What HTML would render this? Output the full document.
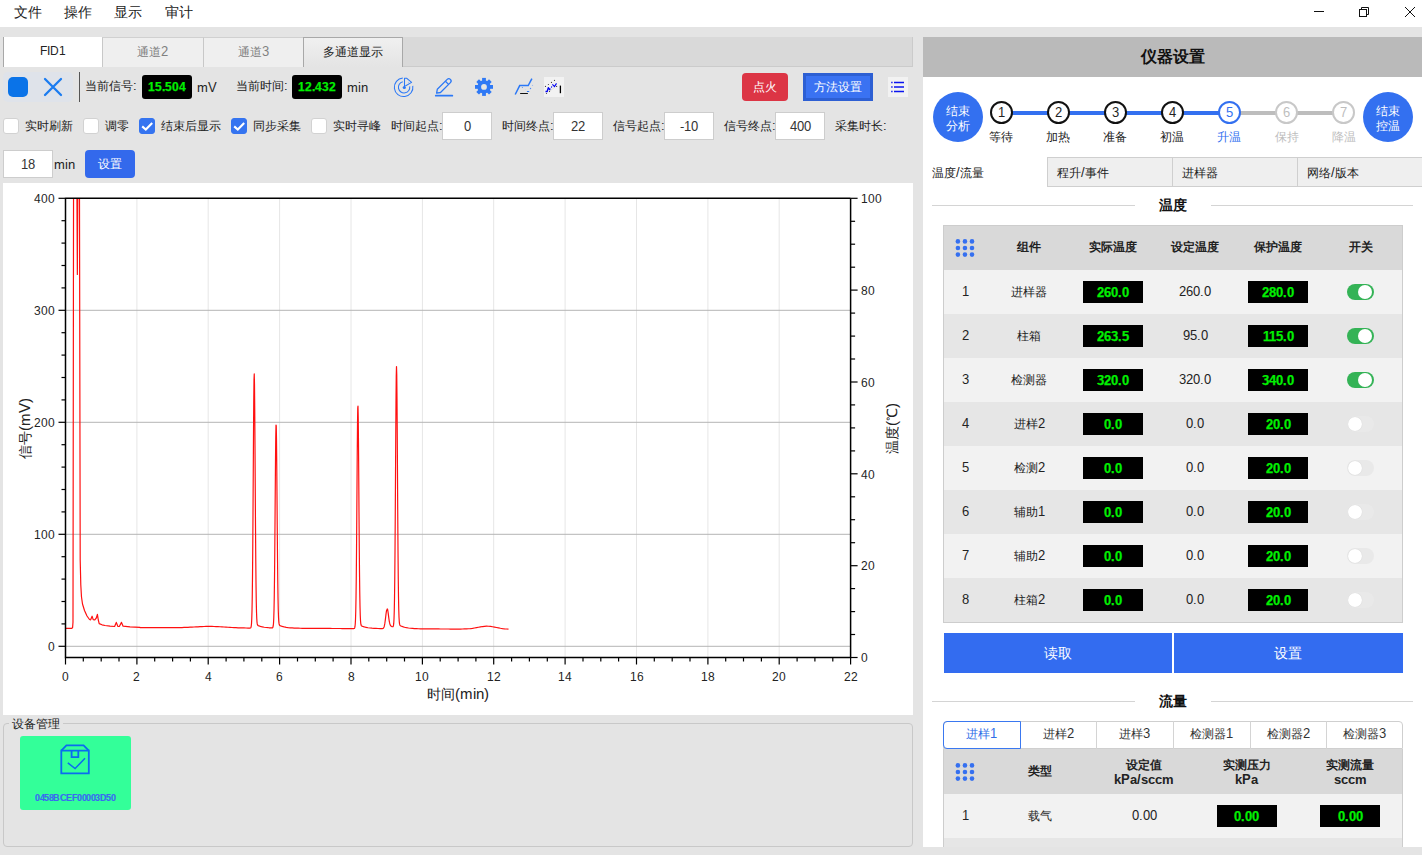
<!DOCTYPE html><html><head><meta charset="utf-8"><style>
@font-face{font-family:LS;src:local("Liberation Sans");size-adjust:108.3%}
@font-face{font-family:LS;font-weight:bold;src:local("Liberation Sans Bold");size-adjust:108.3%}
*{margin:0;padding:0;box-sizing:border-box}
html,body{width:1422px;height:855px;overflow:hidden}
body{background:#e4e4e4;font-family:LS, "Liberation Sans", sans-serif;color:#222;position:relative}
.ab{position:absolute}
.t{position:absolute;white-space:nowrap;line-height:1}
.cb{position:absolute;width:16px;height:16px;border:1px solid #d2d2d2;background:#fff;border-radius:3px}
.cb.on{background:#3574f0;border-color:#3574f0}
.inp{position:absolute;height:28px;background:#fff;border:1px solid #cdcdcd;font-size:12px;text-align:center;line-height:26px;padding-top:1px;color:#333}
.lcd{position:absolute;background:#000;color:#00f000;font-weight:bold;text-align:center;-webkit-text-stroke:0.25px #00f000}
</style></head><body>

<div class="ab" style="left:0;top:0;width:1422px;height:27px;background:#fff"></div>
<div class="t" style="left:14px;top:5px;font-size:14px;color:#222">文件</div>
<div class="t" style="left:64px;top:5px;font-size:14px;color:#222">操作</div>
<div class="t" style="left:114px;top:5px;font-size:14px;color:#222">显示</div>
<div class="t" style="left:165px;top:5px;font-size:14px;color:#222">审计</div>
<svg class="ab" style="left:1300px;top:0" width="122" height="27" viewBox="0 0 122 27">
<line x1="14" y1="11.5" x2="24" y2="11.5" stroke="#111" stroke-width="1"/>
<rect x="59.5" y="9.5" width="7" height="7" fill="none" stroke="#111" stroke-width="1"/>
<path d="M61.5 9.5 V7.5 H68.5 V14.5 H66.5" fill="none" stroke="#111" stroke-width="1"/>
<path d="M105 7 L115 17 M115 7 L105 17" stroke="#111" stroke-width="1"/>
</svg>
<div class="ab" style="left:403px;top:37px;width:510px;height:30px;background:#d9d9d9;border-right:1px solid #cbcbcb;border-bottom:1px solid #cbcbcb"></div>
<div class="ab" style="left:3px;top:37px;width:100px;height:30px;background:#fff;border-left:1px solid #a8a8a8"></div>
<div class="t" style="left:3px;top:46px;width:100px;text-align:center;font-size:11px;color:#222">FID1</div>
<div class="ab" style="left:102px;top:37px;width:102px;height:30px;background:#efefef;border-left:1px solid #c8c8c8;border-top:1px solid #d0d0d0"></div>
<div class="t" style="left:102px;top:46px;width:101px;text-align:center;font-size:12px;color:#808080">通道2</div>
<div class="ab" style="left:203px;top:37px;width:101px;height:30px;background:#efefef;border-left:1px solid #c8c8c8;border-top:1px solid #d0d0d0"></div>
<div class="t" style="left:203px;top:46px;width:100px;text-align:center;font-size:12px;color:#808080">通道3</div>
<div class="ab" style="left:303px;top:37px;width:100px;height:30px;background:linear-gradient(#f0f0f0,#e4e4e4);border:1px solid #a8a8a8;border-bottom:none"></div>
<div class="t" style="left:303px;top:46px;width:100px;text-align:center;font-size:12px;color:#222">多通道显示</div>
<div class="ab" style="left:3px;top:72px;width:70px;height:30px;background:#dfe3ea;border-radius:5px"></div>
<div class="ab" style="left:8px;top:77px;width:20px;height:20px;background:#0a73e8;border-radius:5px"></div>
<svg class="ab" style="left:42px;top:76px" width="22" height="22" viewBox="0 0 22 22"><path d="M3 3 L19 19 M19 3 L3 19" stroke="#1b7cf0" stroke-width="2.3" stroke-linecap="round"/></svg>
<div class="ab" style="left:79px;top:72px;width:1px;height:30px;background:#555"></div>
<div class="t" style="left:85px;top:80px;font-size:12px">当前信号:</div>
<div class="lcd" style="left:142px;top:75px;width:50px;height:24px;border-radius:3px;font-size:11px;line-height:25px">15.504</div>
<div class="t" style="left:197px;top:81.5px;font-size:12px">mV</div>
<div class="t" style="left:236px;top:80px;font-size:12px">当前时间:</div>
<div class="lcd" style="left:292px;top:75px;width:50px;height:24px;border-radius:3px;font-size:11px;line-height:25px">12.432</div>
<div class="t" style="left:347px;top:81.5px;font-size:12px">min</div>
<svg class="ab" style="left:390px;top:74px" width="28" height="26" viewBox="390 74 28 26" fill="none" stroke="#2b78f6" stroke-width="1.05">
<path d="M402.8 78.0 A9.3 9.3 0 1 0 412.8 85.8"/>
<path d="M402.8 81.7 A5.7 5.7 0 1 0 409.7 86.3"/>
<path d="M404.5 87.4 V78.3 H406.8 L411.6 82.4 L405.3 86.0" stroke-linejoin="round"/>
<circle cx="404.3" cy="87.5" r="1.6" fill="#2b78f6" stroke="none"/>
<circle cx="408.4" cy="82.3" r="0.55" fill="#8fb4f8" stroke="none"/>
</svg>
<svg class="ab" style="left:430px;top:74px" width="28" height="26" viewBox="430 74 28 26" fill="none" stroke="#2b78f6" stroke-width="1.3" stroke-linejoin="round">
<path d="M436.6 93.2 L437.3 89.3 L447.2 79.4 A2.26 2.26 0 0 1 450.4 82.6 L440.5 92.5 Z"/>
<path d="M445.4 81.2 L448.6 84.4"/>
<path d="M435.8 95.7 H452.3" stroke-width="1.8" stroke-linecap="round"/>
</svg>
<svg class="ab" style="left:470px;top:74px" width="28" height="26" viewBox="470 74 28 26"><g fill="#2f79f5"><rect x="482.1" y="77.9" width="3.8" height="4" transform="rotate(0 484 86.9)"/><rect x="482.1" y="77.9" width="3.8" height="4" transform="rotate(45 484 86.9)"/><rect x="482.1" y="77.9" width="3.8" height="4" transform="rotate(90 484 86.9)"/><rect x="482.1" y="77.9" width="3.8" height="4" transform="rotate(135 484 86.9)"/><rect x="482.1" y="77.9" width="3.8" height="4" transform="rotate(180 484 86.9)"/><rect x="482.1" y="77.9" width="3.8" height="4" transform="rotate(225 484 86.9)"/><rect x="482.1" y="77.9" width="3.8" height="4" transform="rotate(270 484 86.9)"/><rect x="482.1" y="77.9" width="3.8" height="4" transform="rotate(315 484 86.9)"/><circle cx="484" cy="86.9" r="6.6"/></g><circle cx="484" cy="86.9" r="2.9" fill="#e4e4e4"/></svg>
<svg class="ab" style="left:510px;top:74px" width="28" height="26" viewBox="510 74 28 26" fill="none">
<path d="M515.2 94.5 L519.7 85.6 H528.2 L531.9 78.6" stroke="#2b78f6" stroke-width="1.5"/>
<path d="M520.6 93.5 H527.4" stroke="#111" stroke-width="1.2" stroke-linecap="round"/>
<circle cx="522.4" cy="87.5" r="0.6" fill="#5d95f5"/><circle cx="525.4" cy="89.5" r="0.5" fill="#c9d8f3"/>
<path d="M527.3 91.5 H528.8" stroke="#2b78f6" stroke-width="1" stroke-linecap="round"/>
<circle cx="530.5" cy="88.5" r="0.7" fill="#4f8cf5"/><circle cx="532.5" cy="85.4" r="0.6" fill="#9fbdf2"/>
</svg>
<div class="ab" style="left:544px;top:77px;width:20px;height:20px;background:#f2f2f2"></div>
<svg class="ab" style="left:542px;top:74px" width="26" height="26" viewBox="542 74 26 26" fill="none">
<path d="M545.5 91.5 H547.2 L548.3 87.6 L549.6 89.6 L550.3 88.5" stroke="#0000f0" stroke-width="1.3" stroke-linejoin="round"/>
<path d="M551.4 87.6 L551.8 86.3 M552.4 84.3 L554.5 86.6 L556.5 83.4" stroke="#0000f0" stroke-width="1.1"/>
<g fill="#444"><circle cx="545.5" cy="86.4" r="0.6"/><circle cx="548.4" cy="84.5" r="0.6"/><circle cx="551.5" cy="82.4" r="0.6"/><circle cx="554.5" cy="80.4" r="0.6"/><circle cx="556.6" cy="86.4" r="0.6"/><circle cx="549.5" cy="91.4" r="0.6"/><circle cx="546.5" cy="93.5" r="0.6"/></g>
<path d="M550.2 90.6 L553.6 88.2" stroke="#aaa" stroke-width="0.6" stroke-dasharray="0.8 0.8"/>
<path d="M560.4 85.6 V93.2" stroke="#000" stroke-width="1.3"/>
</svg>
<div class="ab" style="left:742px;top:73px;width:46px;height:28px;background:#dc3545;border-radius:4px;color:#fff;font-size:12px;text-align:center;line-height:28px">点火</div>
<div class="ab" style="left:803px;top:73px;width:70px;height:28px;background:#3a72f2;border:3px solid #2d5fd3;color:#fff;font-size:12px;text-align:center;line-height:22px">方法设置</div>
<div class="ab" style="left:888px;top:77px;width:20px;height:20px;background:#f2f2f2"></div>
<svg class="ab" style="left:888px;top:77px" width="20" height="20" viewBox="0 0 20 20">
<g stroke="#0a14f0" stroke-width="1.6"><path d="M6 5.5 H16 M6 10 H16 M6 14.5 H16"/><path d="M3.2 5.5 H4.6 M3.2 10 H4.6 M3.2 14.5 H4.6"/></g>
</svg>
<div class="cb" style="left:3px;top:118px"></div>
<div class="t" style="left:25px;top:120px;font-size:12px">实时刷新</div>
<div class="cb" style="left:83px;top:118px"></div>
<div class="t" style="left:105px;top:120px;font-size:12px">调零</div>
<div class="cb on" style="left:139px;top:118px"></div><svg class="ab" style="left:139px;top:118px" width="16" height="16" viewBox="0 0 16 16"><path d="M3.2 8.4 L6.8 11.6 L13.2 4.9" fill="none" stroke="#fff" stroke-width="2.1"/></svg>
<div class="t" style="left:161px;top:120px;font-size:12px">结束后显示</div>
<div class="cb on" style="left:231px;top:118px"></div><svg class="ab" style="left:231px;top:118px" width="16" height="16" viewBox="0 0 16 16"><path d="M3.2 8.4 L6.8 11.6 L13.2 4.9" fill="none" stroke="#fff" stroke-width="2.1"/></svg>
<div class="t" style="left:253px;top:120px;font-size:12px">同步采集</div>
<div class="cb" style="left:311px;top:118px"></div>
<div class="t" style="left:333px;top:120px;font-size:12px">实时寻峰</div>
<div class="t" style="left:391px;top:120px;font-size:12px">时间起点:</div>
<div class="inp" style="left:442px;top:112px;width:50px">0</div>
<div class="t" style="left:502px;top:120px;font-size:12px">时间终点:</div>
<div class="inp" style="left:553px;top:112px;width:50px">22</div>
<div class="t" style="left:613px;top:120px;font-size:12px">信号起点:</div>
<div class="inp" style="left:664px;top:112px;width:50px">-10</div>
<div class="t" style="left:724px;top:120px;font-size:12px">信号终点:</div>
<div class="inp" style="left:775px;top:112px;width:50px">400</div>
<div class="t" style="left:835px;top:120px;font-size:12px">采集时长:</div>
<div class="inp" style="left:3px;top:150px;width:50px">18</div>
<div class="t" style="left:54px;top:159px;font-size:12px">min</div>
<div class="ab" style="left:85px;top:150px;width:50px;height:28px;background:#3369ec;border-radius:4px;color:#fff;font-size:12px;text-align:center;line-height:28px">设置</div>
<div class="ab" style="left:3px;top:183px;width:910px;height:532px;background:#fff"></div>
<svg class="ab" style="left:0;top:0" width="1422" height="855" viewBox="0 0 1422 855">
<defs><clipPath id="pc"><rect x="65.5" y="198.3" width="785.1" height="459.2"/></clipPath></defs>
<line x1="136.9" y1="198.3" x2="136.9" y2="657.5" stroke="#e6e6e6" stroke-width="1"/>
<line x1="208.2" y1="198.3" x2="208.2" y2="657.5" stroke="#e6e6e6" stroke-width="1"/>
<line x1="279.6" y1="198.3" x2="279.6" y2="657.5" stroke="#e6e6e6" stroke-width="1"/>
<line x1="351.0" y1="198.3" x2="351.0" y2="657.5" stroke="#e6e6e6" stroke-width="1"/>
<line x1="422.4" y1="198.3" x2="422.4" y2="657.5" stroke="#e6e6e6" stroke-width="1"/>
<line x1="493.7" y1="198.3" x2="493.7" y2="657.5" stroke="#e6e6e6" stroke-width="1"/>
<line x1="565.1" y1="198.3" x2="565.1" y2="657.5" stroke="#e6e6e6" stroke-width="1"/>
<line x1="636.5" y1="198.3" x2="636.5" y2="657.5" stroke="#e6e6e6" stroke-width="1"/>
<line x1="707.9" y1="198.3" x2="707.9" y2="657.5" stroke="#e6e6e6" stroke-width="1"/>
<line x1="779.2" y1="198.3" x2="779.2" y2="657.5" stroke="#e6e6e6" stroke-width="1"/>
<line x1="65.5" y1="646.3" x2="850.6" y2="646.3" stroke="#b4b4b4" stroke-width="1"/>
<line x1="65.5" y1="534.3" x2="850.6" y2="534.3" stroke="#b4b4b4" stroke-width="1"/>
<line x1="65.5" y1="422.3" x2="850.6" y2="422.3" stroke="#b4b4b4" stroke-width="1"/>
<line x1="65.5" y1="310.3" x2="850.6" y2="310.3" stroke="#b4b4b4" stroke-width="1"/>
<path d="M65.50 628.30 L71.80 628.30 L72.60 627.50 L73.00 622.00 L73.60 150.00 L76.70 150.00 L77.35 274.50 L78.00 150.00 L79.40 150.00 L80.20 560.00 L80.80 585.00 L81.50 597.00 L82.50 604.00 L84.50 610.50 L87.00 616.00 L89.50 619.50 L90.60 619.80 L92.10 616.20 L93.20 619.60 L94.80 619.80 L96.30 618.00 L97.40 614.30 L98.30 620.00 L99.20 623.60 L102.00 624.80 L105.00 625.50 L110.00 626.20 L114.60 626.50 L116.30 622.40 L117.80 626.30 L119.30 626.50 L121.50 622.40 L123.10 626.20 L130.00 626.80 L140.00 627.40 L140.00 627.60 L142.00 627.61 L144.00 627.62 L146.00 627.63 L148.00 627.64 L150.00 627.65 L152.00 627.65 L154.00 627.66 L156.00 627.67 L158.00 627.68 L160.00 627.69 L162.00 627.69 L164.00 627.70 L166.00 627.70 L168.00 627.70 L170.00 627.69 L172.00 627.69 L174.00 627.67 L176.00 627.65 L178.00 627.62 L180.00 627.58 L182.00 627.53 L184.00 627.47 L186.00 627.39 L188.00 627.31 L190.00 627.21 L192.00 627.11 L194.00 627.00 L196.00 626.89 L198.00 626.78 L200.00 626.67 L202.00 626.58 L204.00 626.51 L206.00 626.46 L208.00 626.43 L210.00 626.42 L212.00 626.44 L214.00 626.49 L216.00 626.56 L218.00 626.66 L220.00 626.77 L222.00 626.89 L224.00 627.02 L226.00 627.15 L228.00 627.27 L230.00 627.40 L232.00 627.51 L234.00 627.61 L236.00 627.71 L238.00 627.79 L240.00 627.86 L242.00 627.91 L244.00 627.96 L246.00 628.00 L248.00 628.04 L248.25 628.04 L248.50 628.04 L248.75 628.05 L249.00 628.05 L249.25 628.05 L249.50 628.06 L249.75 628.06 L250.00 628.05 L250.25 628.02 L250.50 627.94 L250.75 627.72 L251.00 627.20 L251.25 626.03 L251.50 623.60 L251.75 618.94 L252.00 610.67 L252.25 597.15 L252.50 576.80 L252.75 548.75 L253.00 513.57 L253.25 473.85 L253.50 434.25 L253.75 400.78 L254.00 379.37 L254.25 373.95 L254.50 385.12 L254.75 411.37 L255.00 447.59 L255.25 487.60 L255.50 525.74 L255.75 558.13 L256.00 583.00 L256.25 600.43 L256.50 611.65 L256.75 618.32 L257.00 621.99 L257.25 623.89 L257.50 624.82 L257.75 625.27 L258.00 625.51 L258.25 625.65 L258.50 625.75 L258.75 625.85 L259.00 625.93 L259.25 626.02 L259.50 626.10 L259.75 626.18 L260.00 626.26 L260.25 626.33 L260.50 626.41 L260.75 626.48 L261.00 626.55 L261.25 626.61 L261.50 626.68 L261.75 626.74 L262.00 626.80 L262.25 626.85 L264.25 627.23 L266.25 627.51 L268.25 627.71 L268.50 627.73 L268.75 627.75 L269.00 627.77 L269.25 627.79 L269.50 627.80 L269.75 627.82 L270.00 627.84 L270.25 627.85 L270.50 627.87 L270.75 627.88 L271.00 627.90 L271.25 627.91 L271.50 627.92 L271.75 627.93 L272.00 627.93 L272.25 627.91 L272.50 627.82 L272.75 627.58 L273.00 627.00 L273.25 625.73 L273.50 623.19 L273.75 618.44 L274.00 610.29 L274.25 597.38 L274.50 578.60 L274.75 553.65 L275.00 523.60 L275.25 491.21 L275.50 460.78 L275.75 437.26 L276.00 425.00 L276.25 425.83 L276.50 439.88 L276.75 464.63 L277.00 495.46 L277.25 527.42 L277.50 556.45 L277.75 580.10 L278.00 597.61 L278.25 609.46 L278.50 616.85 L278.75 621.12 L279.00 623.42 L279.25 624.58 L279.50 625.16 L279.75 625.45 L280.00 625.62 L280.25 625.74 L280.50 625.84 L280.75 625.93 L281.00 626.02 L281.25 626.10 L281.50 626.19 L281.75 626.27 L282.00 626.35 L282.25 626.42 L282.50 626.50 L282.75 626.57 L283.00 626.64 L283.25 626.70 L283.50 626.77 L283.75 626.83 L284.00 626.89 L284.25 626.95 L286.25 627.33 L288.25 627.60 L290.25 627.81 L292.25 627.95 L294.25 628.06 L296.25 628.14 L298.25 628.20 L300.25 628.24 L302.25 628.28 L304.25 628.31 L306.25 628.33 L308.25 628.35 L310.25 628.36 L312.25 628.38 L314.25 628.39 L316.25 628.40 L318.25 628.41 L320.25 628.42 L322.25 628.44 L324.25 628.44 L326.25 628.45 L328.25 628.46 L330.25 628.47 L332.25 628.48 L334.25 628.49 L336.25 628.50 L338.25 628.51 L340.25 628.52 L342.25 628.53 L344.25 628.54 L346.25 628.55 L348.25 628.56 L350.25 628.57 L350.50 628.57 L350.75 628.57 L351.00 628.57 L351.25 628.57 L351.50 628.57 L351.75 628.57 L352.00 628.57 L352.25 628.58 L352.50 628.58 L352.75 628.58 L353.00 628.58 L353.25 628.58 L353.50 628.58 L353.75 628.57 L354.00 628.53 L354.25 628.45 L354.50 628.22 L354.75 627.67 L355.00 626.47 L355.25 624.03 L355.50 619.41 L355.75 611.35 L356.00 598.37 L356.25 579.18 L356.50 553.21 L356.75 521.27 L357.00 486.04 L357.25 451.90 L357.50 424.24 L357.75 408.07 L358.00 406.14 L358.25 418.76 L358.50 443.90 L358.75 476.76 L359.00 511.88 L359.25 544.56 L359.50 571.72 L359.75 592.19 L360.00 606.30 L360.25 615.23 L360.50 620.47 L360.75 623.31 L361.00 624.77 L361.25 625.49 L361.50 625.84 L361.75 626.03 L362.00 626.16 L362.25 626.26 L362.50 626.35 L362.75 626.43 L363.00 626.52 L363.25 626.60 L363.50 626.68 L363.75 626.76 L364.00 626.83 L364.25 626.90 L364.50 626.97 L364.75 627.04 L365.00 627.11 L365.25 627.17 L365.50 627.23 L365.75 627.29 L366.00 627.34 L368.00 627.72 L370.00 627.99 L372.00 628.19 L374.00 628.33 L376.00 628.44 L378.00 628.52 L380.00 628.58 L380.25 628.58 L380.50 628.59 L380.75 628.59 L381.00 628.60 L381.25 628.60 L381.50 628.61 L381.75 628.61 L382.00 628.60 L382.25 628.59 L382.50 628.56 L382.75 628.50 L383.00 628.40 L383.25 628.24 L383.50 627.98 L383.75 627.60 L384.00 627.04 L384.25 626.26 L384.50 625.22 L384.75 623.90 L385.00 622.28 L385.25 620.42 L385.50 618.36 L385.75 616.22 L386.00 614.14 L386.25 612.29 L386.50 610.82 L386.75 609.88 L387.00 609.56 L387.25 608.99 L387.50 609.27 L387.75 610.25 L388.00 611.77 L388.25 613.62 L388.50 615.61 L388.75 617.59 L389.00 619.42 L389.25 621.04 L389.50 622.39 L389.75 623.48 L390.00 624.32 L390.25 624.96 L390.50 625.43 L390.75 625.77 L391.00 626.02 L391.25 626.21 L391.50 626.36 L391.75 626.48 L392.00 626.58 L392.25 626.66 L392.50 626.72 L392.75 626.73 L393.00 626.63 L393.25 626.24 L393.50 625.28 L393.75 623.18 L394.00 619.01 L394.25 611.46 L394.50 598.85 L394.75 579.52 L395.00 552.36 L395.25 517.60 L395.50 477.47 L395.75 436.36 L396.00 400.25 L396.25 375.41 L396.50 366.57 L396.75 374.60 L397.00 398.86 L397.25 434.57 L397.50 475.43 L397.75 515.42 L398.00 550.11 L398.25 577.28 L398.50 596.66 L398.75 609.36 L399.00 617.03 L399.25 621.34 L399.50 623.60 L399.75 624.73 L400.00 625.28 L400.25 625.58 L400.50 625.75 L400.75 625.89 L401.00 626.00 L401.25 626.11 L401.50 626.21 L401.75 626.31 L402.00 626.41 L402.25 626.51 L402.50 626.60 L402.75 626.69 L403.00 626.77 L403.25 626.86 L403.50 626.94 L403.75 627.01 L404.00 627.09 L404.25 627.16 L404.50 627.23 L406.50 627.68 L408.50 628.02 L410.50 628.26 L412.50 628.43 L414.50 628.56 L416.50 628.66 L418.50 628.73 L420.50 628.78 L422.50 628.82 L424.50 628.85 L426.50 628.88 L428.50 628.90 L430.50 628.91 L432.50 628.93 L434.50 628.94 L436.50 628.95 L438.50 628.97 L440.50 628.98 L442.50 628.99 L444.50 629.00 L446.50 629.01 L448.50 629.02 L450.50 629.03 L452.50 629.03 L454.50 629.04 L456.50 629.04 L458.50 629.04 L460.50 629.03 L462.50 629.01 L464.50 628.96 L466.50 628.88 L468.50 628.75 L470.50 628.56 L472.50 628.31 L474.50 627.99 L476.50 627.63 L478.50 627.23 L480.50 626.85 L482.50 626.53 L484.50 626.30 L486.50 626.20 L488.50 626.24 L490.50 626.43 L492.50 626.73 L494.50 627.11 L496.50 627.52 L498.50 627.92 L500.50 628.28 L502.50 628.58 L504.50 628.82 L506.50 629.00 L508.50 629.12" fill="none" stroke="#ff1010" stroke-width="1.2" stroke-linejoin="round" clip-path="url(#pc)"/>
<path d="M65.5 198.3 H850.6 M65.5 197.8 V658.2 M64.8 657.5 H851.3000000000001 M850.6 198.3 V657.5" stroke="#000" stroke-width="1.5" fill="none"/>
<line x1="58.5" y1="646.3" x2="65.5" y2="646.3" stroke="#000" stroke-width="1.2"/>
<line x1="61.5" y1="623.9" x2="65.5" y2="623.9" stroke="#000" stroke-width="1.2"/>
<line x1="61.5" y1="601.5" x2="65.5" y2="601.5" stroke="#000" stroke-width="1.2"/>
<line x1="61.5" y1="579.1" x2="65.5" y2="579.1" stroke="#000" stroke-width="1.2"/>
<line x1="61.5" y1="556.7" x2="65.5" y2="556.7" stroke="#000" stroke-width="1.2"/>
<line x1="58.5" y1="534.3" x2="65.5" y2="534.3" stroke="#000" stroke-width="1.2"/>
<line x1="61.5" y1="511.9" x2="65.5" y2="511.9" stroke="#000" stroke-width="1.2"/>
<line x1="61.5" y1="489.5" x2="65.5" y2="489.5" stroke="#000" stroke-width="1.2"/>
<line x1="61.5" y1="467.1" x2="65.5" y2="467.1" stroke="#000" stroke-width="1.2"/>
<line x1="61.5" y1="444.7" x2="65.5" y2="444.7" stroke="#000" stroke-width="1.2"/>
<line x1="58.5" y1="422.3" x2="65.5" y2="422.3" stroke="#000" stroke-width="1.2"/>
<line x1="61.5" y1="399.9" x2="65.5" y2="399.9" stroke="#000" stroke-width="1.2"/>
<line x1="61.5" y1="377.5" x2="65.5" y2="377.5" stroke="#000" stroke-width="1.2"/>
<line x1="61.5" y1="355.1" x2="65.5" y2="355.1" stroke="#000" stroke-width="1.2"/>
<line x1="61.5" y1="332.7" x2="65.5" y2="332.7" stroke="#000" stroke-width="1.2"/>
<line x1="58.5" y1="310.3" x2="65.5" y2="310.3" stroke="#000" stroke-width="1.2"/>
<line x1="61.5" y1="287.9" x2="65.5" y2="287.9" stroke="#000" stroke-width="1.2"/>
<line x1="61.5" y1="265.5" x2="65.5" y2="265.5" stroke="#000" stroke-width="1.2"/>
<line x1="61.5" y1="243.1" x2="65.5" y2="243.1" stroke="#000" stroke-width="1.2"/>
<line x1="61.5" y1="220.7" x2="65.5" y2="220.7" stroke="#000" stroke-width="1.2"/>
<line x1="58.5" y1="198.3" x2="65.5" y2="198.3" stroke="#000" stroke-width="1.2"/>
<line x1="850.6" y1="657.5" x2="857.6" y2="657.5" stroke="#000" stroke-width="1.2"/>
<line x1="850.6" y1="634.5" x2="855.1" y2="634.5" stroke="#000" stroke-width="1.2"/>
<line x1="850.6" y1="611.6" x2="855.1" y2="611.6" stroke="#000" stroke-width="1.2"/>
<line x1="850.6" y1="588.6" x2="855.1" y2="588.6" stroke="#000" stroke-width="1.2"/>
<line x1="850.6" y1="565.7" x2="857.6" y2="565.7" stroke="#000" stroke-width="1.2"/>
<line x1="850.6" y1="542.7" x2="855.1" y2="542.7" stroke="#000" stroke-width="1.2"/>
<line x1="850.6" y1="519.7" x2="855.1" y2="519.7" stroke="#000" stroke-width="1.2"/>
<line x1="850.6" y1="496.8" x2="855.1" y2="496.8" stroke="#000" stroke-width="1.2"/>
<line x1="850.6" y1="473.8" x2="857.6" y2="473.8" stroke="#000" stroke-width="1.2"/>
<line x1="850.6" y1="450.9" x2="855.1" y2="450.9" stroke="#000" stroke-width="1.2"/>
<line x1="850.6" y1="427.9" x2="855.1" y2="427.9" stroke="#000" stroke-width="1.2"/>
<line x1="850.6" y1="404.9" x2="855.1" y2="404.9" stroke="#000" stroke-width="1.2"/>
<line x1="850.6" y1="382.0" x2="857.6" y2="382.0" stroke="#000" stroke-width="1.2"/>
<line x1="850.6" y1="359.0" x2="855.1" y2="359.0" stroke="#000" stroke-width="1.2"/>
<line x1="850.6" y1="336.1" x2="855.1" y2="336.1" stroke="#000" stroke-width="1.2"/>
<line x1="850.6" y1="313.1" x2="855.1" y2="313.1" stroke="#000" stroke-width="1.2"/>
<line x1="850.6" y1="290.1" x2="857.6" y2="290.1" stroke="#000" stroke-width="1.2"/>
<line x1="850.6" y1="267.2" x2="855.1" y2="267.2" stroke="#000" stroke-width="1.2"/>
<line x1="850.6" y1="244.2" x2="855.1" y2="244.2" stroke="#000" stroke-width="1.2"/>
<line x1="850.6" y1="221.3" x2="855.1" y2="221.3" stroke="#000" stroke-width="1.2"/>
<line x1="850.6" y1="198.3" x2="857.6" y2="198.3" stroke="#000" stroke-width="1.2"/>
<line x1="65.5" y1="657.5" x2="65.5" y2="664.5" stroke="#000" stroke-width="1.2"/>
<line x1="83.3" y1="657.5" x2="83.3" y2="661.5" stroke="#000" stroke-width="1.2"/>
<line x1="101.2" y1="657.5" x2="101.2" y2="661.5" stroke="#000" stroke-width="1.2"/>
<line x1="119.0" y1="657.5" x2="119.0" y2="661.5" stroke="#000" stroke-width="1.2"/>
<line x1="136.9" y1="657.5" x2="136.9" y2="664.5" stroke="#000" stroke-width="1.2"/>
<line x1="154.7" y1="657.5" x2="154.7" y2="661.5" stroke="#000" stroke-width="1.2"/>
<line x1="172.6" y1="657.5" x2="172.6" y2="661.5" stroke="#000" stroke-width="1.2"/>
<line x1="190.4" y1="657.5" x2="190.4" y2="661.5" stroke="#000" stroke-width="1.2"/>
<line x1="208.2" y1="657.5" x2="208.2" y2="664.5" stroke="#000" stroke-width="1.2"/>
<line x1="226.1" y1="657.5" x2="226.1" y2="661.5" stroke="#000" stroke-width="1.2"/>
<line x1="243.9" y1="657.5" x2="243.9" y2="661.5" stroke="#000" stroke-width="1.2"/>
<line x1="261.8" y1="657.5" x2="261.8" y2="661.5" stroke="#000" stroke-width="1.2"/>
<line x1="279.6" y1="657.5" x2="279.6" y2="664.5" stroke="#000" stroke-width="1.2"/>
<line x1="297.5" y1="657.5" x2="297.5" y2="661.5" stroke="#000" stroke-width="1.2"/>
<line x1="315.3" y1="657.5" x2="315.3" y2="661.5" stroke="#000" stroke-width="1.2"/>
<line x1="333.1" y1="657.5" x2="333.1" y2="661.5" stroke="#000" stroke-width="1.2"/>
<line x1="351.0" y1="657.5" x2="351.0" y2="664.5" stroke="#000" stroke-width="1.2"/>
<line x1="368.8" y1="657.5" x2="368.8" y2="661.5" stroke="#000" stroke-width="1.2"/>
<line x1="386.7" y1="657.5" x2="386.7" y2="661.5" stroke="#000" stroke-width="1.2"/>
<line x1="404.5" y1="657.5" x2="404.5" y2="661.5" stroke="#000" stroke-width="1.2"/>
<line x1="422.4" y1="657.5" x2="422.4" y2="664.5" stroke="#000" stroke-width="1.2"/>
<line x1="440.2" y1="657.5" x2="440.2" y2="661.5" stroke="#000" stroke-width="1.2"/>
<line x1="458.1" y1="657.5" x2="458.1" y2="661.5" stroke="#000" stroke-width="1.2"/>
<line x1="475.9" y1="657.5" x2="475.9" y2="661.5" stroke="#000" stroke-width="1.2"/>
<line x1="493.7" y1="657.5" x2="493.7" y2="664.5" stroke="#000" stroke-width="1.2"/>
<line x1="511.6" y1="657.5" x2="511.6" y2="661.5" stroke="#000" stroke-width="1.2"/>
<line x1="529.4" y1="657.5" x2="529.4" y2="661.5" stroke="#000" stroke-width="1.2"/>
<line x1="547.3" y1="657.5" x2="547.3" y2="661.5" stroke="#000" stroke-width="1.2"/>
<line x1="565.1" y1="657.5" x2="565.1" y2="664.5" stroke="#000" stroke-width="1.2"/>
<line x1="583.0" y1="657.5" x2="583.0" y2="661.5" stroke="#000" stroke-width="1.2"/>
<line x1="600.8" y1="657.5" x2="600.8" y2="661.5" stroke="#000" stroke-width="1.2"/>
<line x1="618.6" y1="657.5" x2="618.6" y2="661.5" stroke="#000" stroke-width="1.2"/>
<line x1="636.5" y1="657.5" x2="636.5" y2="664.5" stroke="#000" stroke-width="1.2"/>
<line x1="654.3" y1="657.5" x2="654.3" y2="661.5" stroke="#000" stroke-width="1.2"/>
<line x1="672.2" y1="657.5" x2="672.2" y2="661.5" stroke="#000" stroke-width="1.2"/>
<line x1="690.0" y1="657.5" x2="690.0" y2="661.5" stroke="#000" stroke-width="1.2"/>
<line x1="707.9" y1="657.5" x2="707.9" y2="664.5" stroke="#000" stroke-width="1.2"/>
<line x1="725.7" y1="657.5" x2="725.7" y2="661.5" stroke="#000" stroke-width="1.2"/>
<line x1="743.5" y1="657.5" x2="743.5" y2="661.5" stroke="#000" stroke-width="1.2"/>
<line x1="761.4" y1="657.5" x2="761.4" y2="661.5" stroke="#000" stroke-width="1.2"/>
<line x1="779.2" y1="657.5" x2="779.2" y2="664.5" stroke="#000" stroke-width="1.2"/>
<line x1="797.1" y1="657.5" x2="797.1" y2="661.5" stroke="#000" stroke-width="1.2"/>
<line x1="814.9" y1="657.5" x2="814.9" y2="661.5" stroke="#000" stroke-width="1.2"/>
<line x1="832.8" y1="657.5" x2="832.8" y2="661.5" stroke="#000" stroke-width="1.2"/>
<line x1="850.6" y1="657.5" x2="850.6" y2="664.5" stroke="#000" stroke-width="1.2"/>
</svg>
<div class="t" style="left:0;width:55px;text-align:right;top:642.0px;font-size:11.5px;color:#222">0</div>
<div class="t" style="left:0;width:55px;text-align:right;top:530.0px;font-size:11.5px;color:#222">100</div>
<div class="t" style="left:0;width:55px;text-align:right;top:418.0px;font-size:11.5px;color:#222">200</div>
<div class="t" style="left:0;width:55px;text-align:right;top:306.0px;font-size:11.5px;color:#222">300</div>
<div class="t" style="left:0;width:55px;text-align:right;top:194.0px;font-size:11.5px;color:#222">400</div>
<div class="t" style="left:861px;top:653.2px;font-size:11.5px;color:#222">0</div>
<div class="t" style="left:861px;top:561.4px;font-size:11.5px;color:#222">20</div>
<div class="t" style="left:861px;top:469.5px;font-size:11.5px;color:#222">40</div>
<div class="t" style="left:861px;top:377.7px;font-size:11.5px;color:#222">60</div>
<div class="t" style="left:861px;top:285.8px;font-size:11.5px;color:#222">80</div>
<div class="t" style="left:861px;top:194.0px;font-size:11.5px;color:#222">100</div>
<div class="t" style="left:45.5px;width:40px;text-align:center;top:672px;font-size:11.5px;color:#222">0</div>
<div class="t" style="left:116.9px;width:40px;text-align:center;top:672px;font-size:11.5px;color:#222">2</div>
<div class="t" style="left:188.2px;width:40px;text-align:center;top:672px;font-size:11.5px;color:#222">4</div>
<div class="t" style="left:259.6px;width:40px;text-align:center;top:672px;font-size:11.5px;color:#222">6</div>
<div class="t" style="left:331.0px;width:40px;text-align:center;top:672px;font-size:11.5px;color:#222">8</div>
<div class="t" style="left:402.4px;width:40px;text-align:center;top:672px;font-size:11.5px;color:#222">10</div>
<div class="t" style="left:473.7px;width:40px;text-align:center;top:672px;font-size:11.5px;color:#222">12</div>
<div class="t" style="left:545.1px;width:40px;text-align:center;top:672px;font-size:11.5px;color:#222">14</div>
<div class="t" style="left:616.5px;width:40px;text-align:center;top:672px;font-size:11.5px;color:#222">16</div>
<div class="t" style="left:687.9px;width:40px;text-align:center;top:672px;font-size:11.5px;color:#222">18</div>
<div class="t" style="left:759.2px;width:40px;text-align:center;top:672px;font-size:11.5px;color:#222">20</div>
<div class="t" style="left:830.6px;width:40px;text-align:center;top:672px;font-size:11.5px;color:#222">22</div>
<div class="t" style="left:408px;width:100px;text-align:center;top:687px;font-size:14px;color:#222">时间(min)</div>
<div class="t" style="left:-25px;width:100px;text-align:center;top:421px;font-size:14px;color:#222;transform:rotate(-90deg)">信号(mV)</div>
<div class="t" style="left:842px;width:100px;text-align:center;top:421px;font-size:14px;color:#222;transform:rotate(-90deg)">温度(℃)</div>
<div class="ab" style="left:3px;top:723px;width:910px;height:124px;border:1px solid #c8c8c8;border-radius:4px"></div>
<div class="t" style="left:9px;top:717.5px;padding:0 3px;background:#e4e4e4;font-size:12px;color:#222">设备管理</div>
<div class="ab" style="left:19.5px;top:736px;width:111px;height:74px;background:#33ff99;border-radius:3px"></div>
<svg class="ab" style="left:50px;top:738px" width="50" height="45" viewBox="50 738 50 45" fill="none" stroke="#0a6cf0" stroke-width="1.8">
<path d="M61.3 750.6 L66.4 745.4 H83.6 L88.8 750.6"/>
<path d="M61.3 773.3 V750.6 H88.8 V773.3 Z"/>
<path d="M71.6 750.6 V757.2 H78.3 V750.6"/>
<path d="M67.8 762.8 L75.1 768.6 L85 758.3" stroke-width="1.5"/>
</svg>
<div class="t" style="left:19.5px;width:111px;text-align:center;top:794px;font-size:8.4px;font-weight:bold;letter-spacing:-0.5px;color:#3a6af0;-webkit-text-stroke:0.2px #3a6af0">0458BCEF00003D50</div>
<div class="ab" style="left:923px;top:37px;width:499px;height:810px;background:#fff"></div>
<div class="ab" style="left:923px;top:37px;width:499px;height:40px;background:#bababa"></div>
<div class="t" style="left:923px;width:499px;text-align:center;top:48px;font-size:16px;font-weight:bold;color:#111">仪器设置</div>
<div class="ab" style="left:933px;top:92px;width:50px;height:50px;border-radius:50%;background:#3370f0"></div>
<div class="t" style="left:933px;width:50px;text-align:center;top:102.5px;font-size:12px;line-height:15px;color:#fff;white-space:normal">结束<br>分析</div>
<div class="ab" style="left:1363px;top:92px;width:50px;height:50px;border-radius:50%;background:#3370f0"></div>
<div class="t" style="left:1363px;width:50px;text-align:center;top:102.5px;font-size:12px;line-height:15px;color:#fff;white-space:normal">结束<br>控温</div>
<div class="ab" style="left:1001.0px;top:111px;width:57.1px;height:4px;background:#3370f0"></div>
<div class="ab" style="left:1058.1px;top:111px;width:57.1px;height:4px;background:#3370f0"></div>
<div class="ab" style="left:1115.2px;top:111px;width:57.1px;height:4px;background:#3370f0"></div>
<div class="ab" style="left:1172.3px;top:111px;width:57.1px;height:4px;background:#3370f0"></div>
<div class="ab" style="left:1229.4px;top:111px;width:57.1px;height:4px;background:#bdbdbd"></div>
<div class="ab" style="left:1286.5px;top:111px;width:57.1px;height:4px;background:#bdbdbd"></div>
<div class="ab" style="left:989.5px;top:101.3px;width:23px;height:23px;border-radius:50%;border:2px solid #111;background:#fff"></div>
<div class="t" style="left:989.5px;width:23px;text-align:center;top:106.7px;font-size:12px;color:#222">1</div>
<div class="t" style="left:981.0px;width:40px;text-align:center;top:130.5px;font-size:12px;color:#222">等待</div>
<div class="ab" style="left:1046.6px;top:101.3px;width:23px;height:23px;border-radius:50%;border:2px solid #111;background:#fff"></div>
<div class="t" style="left:1046.6px;width:23px;text-align:center;top:106.7px;font-size:12px;color:#222">2</div>
<div class="t" style="left:1038.1px;width:40px;text-align:center;top:130.5px;font-size:12px;color:#222">加热</div>
<div class="ab" style="left:1103.7px;top:101.3px;width:23px;height:23px;border-radius:50%;border:2px solid #111;background:#fff"></div>
<div class="t" style="left:1103.7px;width:23px;text-align:center;top:106.7px;font-size:12px;color:#222">3</div>
<div class="t" style="left:1095.2px;width:40px;text-align:center;top:130.5px;font-size:12px;color:#222">准备</div>
<div class="ab" style="left:1160.8px;top:101.3px;width:23px;height:23px;border-radius:50%;border:2px solid #111;background:#fff"></div>
<div class="t" style="left:1160.8px;width:23px;text-align:center;top:106.7px;font-size:12px;color:#222">4</div>
<div class="t" style="left:1152.3px;width:40px;text-align:center;top:130.5px;font-size:12px;color:#222">初温</div>
<div class="ab" style="left:1217.9px;top:101.3px;width:23px;height:23px;border-radius:50%;border:2px solid #3370f0;background:#fff"></div>
<div class="t" style="left:1217.9px;width:23px;text-align:center;top:106.7px;font-size:12px;color:#3370f0">5</div>
<div class="t" style="left:1209.4px;width:40px;text-align:center;top:130.5px;font-size:12px;color:#3370f0">升温</div>
<div class="ab" style="left:1275.0px;top:101.3px;width:23px;height:23px;border-radius:50%;border:2px solid #c8c8c8;background:#fff"></div>
<div class="t" style="left:1275.0px;width:23px;text-align:center;top:106.7px;font-size:12px;color:#bdbdbd">6</div>
<div class="t" style="left:1266.5px;width:40px;text-align:center;top:130.5px;font-size:12px;color:#bdbdbd">保持</div>
<div class="ab" style="left:1332.1px;top:101.3px;width:23px;height:23px;border-radius:50%;border:2px solid #c8c8c8;background:#fff"></div>
<div class="t" style="left:1332.1px;width:23px;text-align:center;top:106.7px;font-size:12px;color:#bdbdbd">7</div>
<div class="t" style="left:1323.6px;width:40px;text-align:center;top:130.5px;font-size:12px;color:#bdbdbd">降温</div>
<div class="t" style="left:932px;top:167px;font-size:12px;color:#222">温度/流量</div>
<div class="ab" style="left:1047px;top:157px;width:126px;height:30px;background:#efefef;border:1px solid #cfcfcf"></div>
<div class="t" style="left:1057px;top:167px;font-size:12px;color:#222">程升/事件</div>
<div class="ab" style="left:1172px;top:157px;width:126px;height:30px;background:#efefef;border:1px solid #cfcfcf"></div>
<div class="t" style="left:1182px;top:167px;font-size:12px;color:#222">进样器</div>
<div class="ab" style="left:1297px;top:157px;width:126px;height:30px;background:#efefef;border:1px solid #cfcfcf"></div>
<div class="t" style="left:1307px;top:167px;font-size:12px;color:#222">网络/版本</div>
<div class="ab" style="left:932px;top:205px;width:203px;height:1px;background:#d4d4d4"></div>
<div class="ab" style="left:1211px;top:205px;width:202px;height:1px;background:#d4d4d4"></div>
<div class="t" style="left:1135px;width:76px;text-align:center;top:198px;font-size:14px;font-weight:bold;color:#111">温度</div>
<div class="ab" style="left:943px;top:225px;width:460px;height:398px;border:1px solid #cdcdcd;background:#f2f2f2"></div>
<div class="ab" style="left:944px;top:226px;width:458px;height:43.5px;background:#d9d9d9"></div>
<svg class="ab" style="left:955px;top:238px" width="20" height="20" viewBox="0 0 20 20" fill="#3570f0"><circle cx="2.90" cy="3.40" r="2.3"/><circle cx="9.95" cy="3.40" r="2.3"/><circle cx="17.00" cy="3.40" r="2.3"/><circle cx="2.90" cy="10.00" r="2.3"/><circle cx="9.95" cy="10.00" r="2.3"/><circle cx="17.00" cy="10.00" r="2.3"/><circle cx="2.90" cy="16.60" r="2.3"/><circle cx="9.95" cy="16.60" r="2.3"/><circle cx="17.00" cy="16.60" r="2.3"/></svg>
<div class="t" style="left:989.4000000000001px;width:80px;text-align:center;top:241px;font-size:12px;font-weight:bold;color:#222">组件</div>
<div class="t" style="left:1072.7px;width:80px;text-align:center;top:241px;font-size:12px;font-weight:bold;color:#222">实际温度</div>
<div class="t" style="left:1155.3px;width:80px;text-align:center;top:241px;font-size:12px;font-weight:bold;color:#222">设定温度</div>
<div class="t" style="left:1237.6px;width:80px;text-align:center;top:241px;font-size:12px;font-weight:bold;color:#222">保护温度</div>
<div class="t" style="left:1320.5px;width:80px;text-align:center;top:241px;font-size:12px;font-weight:bold;color:#222">开关</div>
<div class="t" style="left:945.2px;width:40px;text-align:center;top:285.5px;font-size:12px;color:#222">1</div>
<div class="t" style="left:989.4000000000001px;width:80px;text-align:center;top:285.5px;font-size:12px;color:#222">进样器</div>
<div class="lcd" style="left:1083px;top:280.5px;width:60px;height:22px;font-size:12px;line-height:23px">260.0</div>
<div class="t" style="left:1155.3px;width:80px;text-align:center;top:285.5px;font-size:12px;color:#222">260.0</div>
<div class="lcd" style="left:1248px;top:280.5px;width:60px;height:22px;font-size:12px;line-height:23px">280.0</div>
<div class="ab" style="left:1347px;top:283.5px;width:27px;height:16px;border-radius:8px;background:#34b356"></div>
<div class="ab" style="left:1358px;top:284.5px;width:14px;height:14px;border-radius:50%;background:#fff"></div>
<div class="ab" style="left:944px;top:313.5px;width:458px;height:44px;background:#e6e6e6"></div>
<div class="t" style="left:945.2px;width:40px;text-align:center;top:329.5px;font-size:12px;color:#222">2</div>
<div class="t" style="left:989.4000000000001px;width:80px;text-align:center;top:329.5px;font-size:12px;color:#222">柱箱</div>
<div class="lcd" style="left:1083px;top:324.5px;width:60px;height:22px;font-size:12px;line-height:23px">263.5</div>
<div class="t" style="left:1155.3px;width:80px;text-align:center;top:329.5px;font-size:12px;color:#222">95.0</div>
<div class="lcd" style="left:1248px;top:324.5px;width:60px;height:22px;font-size:12px;line-height:23px">115.0</div>
<div class="ab" style="left:1347px;top:327.5px;width:27px;height:16px;border-radius:8px;background:#34b356"></div>
<div class="ab" style="left:1358px;top:328.5px;width:14px;height:14px;border-radius:50%;background:#fff"></div>
<div class="t" style="left:945.2px;width:40px;text-align:center;top:373.5px;font-size:12px;color:#222">3</div>
<div class="t" style="left:989.4000000000001px;width:80px;text-align:center;top:373.5px;font-size:12px;color:#222">检测器</div>
<div class="lcd" style="left:1083px;top:368.5px;width:60px;height:22px;font-size:12px;line-height:23px">320.0</div>
<div class="t" style="left:1155.3px;width:80px;text-align:center;top:373.5px;font-size:12px;color:#222">320.0</div>
<div class="lcd" style="left:1248px;top:368.5px;width:60px;height:22px;font-size:12px;line-height:23px">340.0</div>
<div class="ab" style="left:1347px;top:371.5px;width:27px;height:16px;border-radius:8px;background:#34b356"></div>
<div class="ab" style="left:1358px;top:372.5px;width:14px;height:14px;border-radius:50%;background:#fff"></div>
<div class="ab" style="left:944px;top:401.5px;width:458px;height:44px;background:#e6e6e6"></div>
<div class="t" style="left:945.2px;width:40px;text-align:center;top:417.5px;font-size:12px;color:#222">4</div>
<div class="t" style="left:989.4000000000001px;width:80px;text-align:center;top:417.5px;font-size:12px;color:#222">进样2</div>
<div class="lcd" style="left:1083px;top:412.5px;width:60px;height:22px;font-size:12px;line-height:23px">0.0</div>
<div class="t" style="left:1155.3px;width:80px;text-align:center;top:417.5px;font-size:12px;color:#222">0.0</div>
<div class="lcd" style="left:1248px;top:412.5px;width:60px;height:22px;font-size:12px;line-height:23px">20.0</div>
<div class="ab" style="left:1347px;top:415.5px;width:27px;height:16px;border-radius:8px;background:#e9e9e9"></div>
<div class="ab" style="left:1348px;top:416.5px;width:14px;height:14px;border-radius:50%;background:#fff;box-shadow:0 0 1px rgba(0,0,0,0.15)"></div>
<div class="t" style="left:945.2px;width:40px;text-align:center;top:461.5px;font-size:12px;color:#222">5</div>
<div class="t" style="left:989.4000000000001px;width:80px;text-align:center;top:461.5px;font-size:12px;color:#222">检测2</div>
<div class="lcd" style="left:1083px;top:456.5px;width:60px;height:22px;font-size:12px;line-height:23px">0.0</div>
<div class="t" style="left:1155.3px;width:80px;text-align:center;top:461.5px;font-size:12px;color:#222">0.0</div>
<div class="lcd" style="left:1248px;top:456.5px;width:60px;height:22px;font-size:12px;line-height:23px">20.0</div>
<div class="ab" style="left:1347px;top:459.5px;width:27px;height:16px;border-radius:8px;background:#e9e9e9"></div>
<div class="ab" style="left:1348px;top:460.5px;width:14px;height:14px;border-radius:50%;background:#fff;box-shadow:0 0 1px rgba(0,0,0,0.15)"></div>
<div class="ab" style="left:944px;top:489.5px;width:458px;height:44px;background:#e6e6e6"></div>
<div class="t" style="left:945.2px;width:40px;text-align:center;top:505.5px;font-size:12px;color:#222">6</div>
<div class="t" style="left:989.4000000000001px;width:80px;text-align:center;top:505.5px;font-size:12px;color:#222">辅助1</div>
<div class="lcd" style="left:1083px;top:500.5px;width:60px;height:22px;font-size:12px;line-height:23px">0.0</div>
<div class="t" style="left:1155.3px;width:80px;text-align:center;top:505.5px;font-size:12px;color:#222">0.0</div>
<div class="lcd" style="left:1248px;top:500.5px;width:60px;height:22px;font-size:12px;line-height:23px">20.0</div>
<div class="ab" style="left:1347px;top:503.5px;width:27px;height:16px;border-radius:8px;background:#e9e9e9"></div>
<div class="ab" style="left:1348px;top:504.5px;width:14px;height:14px;border-radius:50%;background:#fff;box-shadow:0 0 1px rgba(0,0,0,0.15)"></div>
<div class="t" style="left:945.2px;width:40px;text-align:center;top:549.5px;font-size:12px;color:#222">7</div>
<div class="t" style="left:989.4000000000001px;width:80px;text-align:center;top:549.5px;font-size:12px;color:#222">辅助2</div>
<div class="lcd" style="left:1083px;top:544.5px;width:60px;height:22px;font-size:12px;line-height:23px">0.0</div>
<div class="t" style="left:1155.3px;width:80px;text-align:center;top:549.5px;font-size:12px;color:#222">0.0</div>
<div class="lcd" style="left:1248px;top:544.5px;width:60px;height:22px;font-size:12px;line-height:23px">20.0</div>
<div class="ab" style="left:1347px;top:547.5px;width:27px;height:16px;border-radius:8px;background:#e9e9e9"></div>
<div class="ab" style="left:1348px;top:548.5px;width:14px;height:14px;border-radius:50%;background:#fff;box-shadow:0 0 1px rgba(0,0,0,0.15)"></div>
<div class="ab" style="left:944px;top:577.5px;width:458px;height:44px;background:#e6e6e6"></div>
<div class="t" style="left:945.2px;width:40px;text-align:center;top:593.5px;font-size:12px;color:#222">8</div>
<div class="t" style="left:989.4000000000001px;width:80px;text-align:center;top:593.5px;font-size:12px;color:#222">柱箱2</div>
<div class="lcd" style="left:1083px;top:588.5px;width:60px;height:22px;font-size:12px;line-height:23px">0.0</div>
<div class="t" style="left:1155.3px;width:80px;text-align:center;top:593.5px;font-size:12px;color:#222">0.0</div>
<div class="lcd" style="left:1248px;top:588.5px;width:60px;height:22px;font-size:12px;line-height:23px">20.0</div>
<div class="ab" style="left:1347px;top:591.5px;width:27px;height:16px;border-radius:8px;background:#e9e9e9"></div>
<div class="ab" style="left:1348px;top:592.5px;width:14px;height:14px;border-radius:50%;background:#fff;box-shadow:0 0 1px rgba(0,0,0,0.15)"></div>
<div class="ab" style="left:943.5px;top:633px;width:228px;height:40px;background:#336cf0;color:#fff;font-size:14px;text-align:center;line-height:40px">读取</div>
<div class="ab" style="left:1174px;top:633px;width:228.5px;height:40px;background:#336cf0;color:#fff;font-size:14px;text-align:center;line-height:40px">设置</div>
<div class="ab" style="left:932px;top:701px;width:203px;height:1px;background:#d4d4d4"></div>
<div class="ab" style="left:1211px;top:701px;width:202px;height:1px;background:#d4d4d4"></div>
<div class="t" style="left:1135px;width:76px;text-align:center;top:694px;font-size:14px;font-weight:bold;color:#111">流量</div>
<div class="ab" style="left:943px;top:721px;width:460px;height:28px;border:1px solid #cfcfcf;border-radius:4px 4px 0 0;background:#fff"></div>
<div class="t" style="left:943.0px;width:76.7px;text-align:center;top:728px;font-size:12px;color:#2f6fe8">进样1</div>
<div class="ab" style="left:1019.7px;top:721px;width:1px;height:28px;background:#d4d4d4"></div>
<div class="t" style="left:1019.7px;width:76.7px;text-align:center;top:728px;font-size:12px;color:#333">进样2</div>
<div class="ab" style="left:1096.3px;top:721px;width:1px;height:28px;background:#d4d4d4"></div>
<div class="t" style="left:1096.3px;width:76.7px;text-align:center;top:728px;font-size:12px;color:#333">进样3</div>
<div class="ab" style="left:1173.0px;top:721px;width:1px;height:28px;background:#d4d4d4"></div>
<div class="t" style="left:1173.0px;width:76.7px;text-align:center;top:728px;font-size:12px;color:#333">检测器1</div>
<div class="ab" style="left:1249.7px;top:721px;width:1px;height:28px;background:#d4d4d4"></div>
<div class="t" style="left:1249.7px;width:76.7px;text-align:center;top:728px;font-size:12px;color:#333">检测器2</div>
<div class="ab" style="left:1326.3px;top:721px;width:1px;height:28px;background:#d4d4d4"></div>
<div class="t" style="left:1326.3px;width:76.7px;text-align:center;top:728px;font-size:12px;color:#333">检测器3</div>
<div class="ab" style="left:943px;top:721px;width:77.7px;height:28px;border:1px solid #3a78f0;border-radius:4px 0 0 4px"></div>
<div class="ab" style="left:943px;top:749px;width:460px;height:98px;border:1px solid #cdcdcd;border-bottom:none;background:#e6e6e6"></div>
<div class="ab" style="left:944px;top:749px;width:458px;height:45px;background:#d9d9d9"></div>
<div class="ab" style="left:944px;top:794px;width:458px;height:44px;background:#f2f2f2"></div>
<svg class="ab" style="left:955px;top:761.5px" width="20" height="20" viewBox="0 0 20 20" fill="#3570f0"><circle cx="2.90" cy="3.40" r="2.3"/><circle cx="9.95" cy="3.40" r="2.3"/><circle cx="17.00" cy="3.40" r="2.3"/><circle cx="2.90" cy="10.00" r="2.3"/><circle cx="9.95" cy="10.00" r="2.3"/><circle cx="17.00" cy="10.00" r="2.3"/><circle cx="2.90" cy="16.60" r="2.3"/><circle cx="9.95" cy="16.60" r="2.3"/><circle cx="17.00" cy="16.60" r="2.3"/></svg>
<div class="t" style="left:1000px;width:80px;text-align:center;top:765px;font-size:12px;font-weight:bold;color:#222">类型</div>
<div class="t" style="left:1094px;width:100px;text-align:center;top:757px;font-size:12px;line-height:15px;font-weight:bold;color:#222;white-space:normal">设定值<br>kPa/sccm</div>
<div class="t" style="left:1196.5px;width:100px;text-align:center;top:757px;font-size:12px;line-height:15px;font-weight:bold;color:#222;white-space:normal">实测压力<br>kPa</div>
<div class="t" style="left:1300px;width:100px;text-align:center;top:757px;font-size:12px;line-height:15px;font-weight:bold;color:#222;white-space:normal">实测流量<br>sccm</div>
<div class="t" style="left:945px;width:40px;text-align:center;top:810px;font-size:12px;color:#222">1</div>
<div class="t" style="left:1000px;width:80px;text-align:center;top:810px;font-size:12px;color:#222">载气</div>
<div class="t" style="left:1104px;width:80px;text-align:center;top:810px;font-size:12px;color:#222">0.00</div>
<div class="lcd" style="left:1216.5px;top:805px;width:60px;height:22px;font-size:12px;line-height:23px">0.00</div>
<div class="lcd" style="left:1320px;top:805px;width:60px;height:22px;font-size:12px;line-height:23px">0.00</div>
</body></html>
